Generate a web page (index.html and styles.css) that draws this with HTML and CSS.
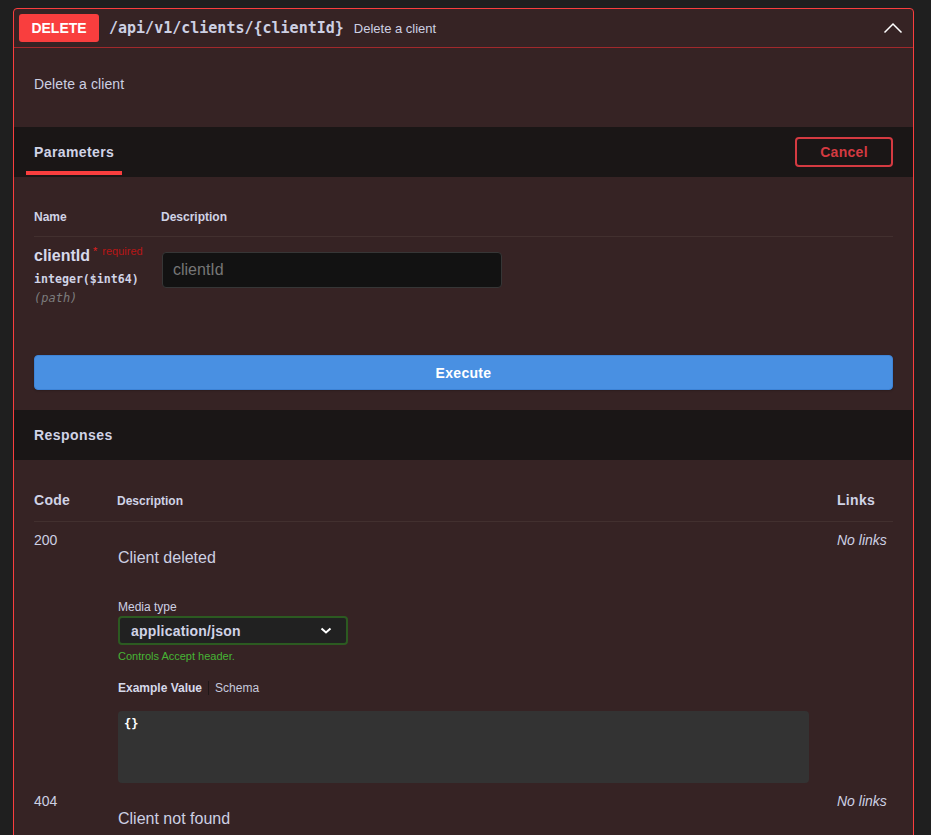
FILE: index.html
```html
<!DOCTYPE html>
<html lang="en">
<head>
<meta charset="utf-8">
<title>DELETE /api/v1/clients/{clientId}</title>
<link rel="stylesheet" href="styles.css">
</head>
<body>
<div class="opblock">
  <div class="summary">
    <span class="method">DELETE</span>
    <span class="path">/api/v1/clients/{clientId}</span>
    <span class="summary-desc">Delete a client</span>
    <svg class="arrow" width="20" height="20" viewBox="0 0 20 20" aria-hidden="true">
      <polyline points="1.5,14.5 10,6 18.5,14.5" fill="none" stroke="#ffffff" stroke-width="1.5"/>
    </svg>
  </div>

  <div class="description">Delete a client</div>

  <div class="section-header">
    <div class="tab">Parameters</div>
    <button class="btn-cancel">Cancel</button>
  </div>

  <div class="params">
    <div class="params-head">
      <div>Name</div>
      <div>Description</div>
    </div>
    <div class="param-row">
      <div class="param-name">
        <div class="pname">clientId<span class="star">*</span><span class="req">required</span></div>
        <div class="ptype">integer($int64)</div>
        <div class="pin">(path)</div>
      </div>
      <div class="param-desc">
        <input class="pinput" type="text" placeholder="clientId">
      </div>
    </div>
  </div>

  <div class="execute-wrap">
    <button class="execute">Execute</button>
  </div>

  <div class="section-header">
    <h4 class="section-title">Responses</h4>
  </div>

  <div class="responses">
    <div class="resp-head">
      <div class="col-code">Code</div>
      <div class="col-desc">Description</div>
      <div class="col-links">Links</div>
    </div>

    <div class="resp-row">
      <div class="status">200</div>
      <div class="resp-desc">
        <p class="resp-msg">Client deleted</p>
        <div class="media-label">Media type</div>
        <div class="select">
          <span>application/json</span>
          <svg class="select-chev" width="12" height="7" viewBox="0 0 12 7" aria-hidden="true">
            <polyline points="1.5,1.5 6,5.5 10.5,1.5" fill="none" stroke="#ffffff" stroke-width="2"/>
          </svg>
        </div>
        <div class="accept-msg">Controls Accept header.</div>
        <div class="example-tabs">
          <span class="ex-tab active">Example Value</span>
          <span class="ex-tab">Schema</span>
        </div>
        <pre class="code-block">{}</pre>
      </div>
      <div class="links">No links</div>
    </div>

    <div class="resp-row">
      <div class="status">404</div>
      <div class="resp-desc">
        <p class="resp-msg">Client not found</p>
      </div>
      <div class="links">No links</div>
    </div>
  </div>
</div>
</body>
</html>
```

FILE: styles.css
```css
* {
  box-sizing: border-box;
}

html, body {
  background: #1f1f1f;
}

body {
  margin: 0;
  padding: 8px 17px 40px 13px;
  font-family: "Liberation Sans", Arial, sans-serif;
  color: #cdd0e3;
}

.opblock {
  width: 901px;
  border: 1px solid #f93e3e;
  border-radius: 4px;
  background: #362324;
}

/* summary header */
.summary {
  display: flex;
  align-items: center;
  padding: 5px;
  border-bottom: 1px solid #a1292c;
}

.method {
  width: 80px;
  padding: 6px 0;
  line-height: 16px;
  text-align: center;
  font-size: 14px;
  font-weight: 700;
  color: #ffffff;
  background: #f93e3e;
  border-radius: 3px;
}

.path {
  padding: 0 10px;
  font-family: "DejaVu Sans Mono", monospace;
  font-size: 15px;
  font-weight: 700;
  color: #cdd0e3;
}

.summary-desc {
  font-size: 13px;
  color: #cdd0e3;
}

.arrow {
  margin-left: auto;
  margin-right: 5px;
}

/* description */
.description {
  padding: 28px 20px 35px;
  font-size: 14px;
  line-height: 16px;
  letter-spacing: 0.1px;
}

/* section headers */
.section-header {
  display: flex;
  align-items: center;
  justify-content: space-between;
  height: 50px;
  padding: 0 20px 0 12px;
  background: #1a1616;
}

.tab {
  align-self: stretch;
  display: flex;
  align-items: center;
  padding: 5px 8px 0;
  margin-bottom: 2px;
  border-bottom: 4px solid #f93e3e;
  font-size: 14px;
  font-weight: 700;
  letter-spacing: 0.4px;
  color: #d0d3e6;
}

.section-title {
  margin: 0;
  padding-left: 8px;
  font-size: 14px;
  font-weight: 700;
  letter-spacing: 0.45px;
  color: #d0d3e6;
}

.btn-cancel {
  width: 98px;
  height: 30px;
  padding: 0;
  background: transparent;
  border: 2px solid #d43a41;
  border-radius: 4px;
  font-family: "Liberation Sans", Arial, sans-serif;
  font-size: 14px;
  font-weight: 700;
  letter-spacing: 0.3px;
  color: #d43a41;
}

/* parameters */
.params {
  padding: 20px 20px 20px;
}

.params-head {
  display: grid;
  grid-template-columns: 128px 1fr;
  padding: 13px 0 12px;
  border-bottom: 1px solid #42302f;
  font-size: 12px;
  font-weight: 700;
  color: #d0d3e6;
}

.params-head div:last-child {
  margin-left: -1px;
}

.param-row {
  display: grid;
  grid-template-columns: 128px 1fr;
  padding: 10px 0 10px;
}

.pname {
  font-size: 16px;
  font-weight: 700;
  color: #d6d9ea;
}

.star {
  padding-left: 3px;
  font-size: 11px;
  font-weight: 400;
  line-height: 0;
  color: #e02020;
  vertical-align: 6px;
}

.req {
  padding-left: 5px;
  font-size: 11px;
  font-weight: 400;
  line-height: 0;
  color: #b81616;
  vertical-align: 6px;
}

.ptype {
  padding: 7px 0 5px;
  font-family: "DejaVu Sans Mono", monospace;
  font-size: 11.6px;
  font-weight: 700;
  color: #d0d3e6;
}

.pin {
  font-family: "DejaVu Sans Mono", monospace;
  font-size: 12px;
  font-style: italic;
  color: #7c7c7c;
}

.pinput {
  display: block;
  width: 340px;
  height: 36px;
  margin: 5px 0 0;
  padding: 8px 10px;
  background: #121212;
  border: 1px solid #363636;
  border-radius: 4px;
  font-family: "Liberation Sans", Arial, sans-serif;
  font-size: 16px;
  color: #cdd0e3;
}

.pinput::placeholder {
  color: #767676;
}

/* execute */
.execute-wrap {
  padding: 20px;
}

.execute {
  display: block;
  width: 100%;
  height: 35px;
  padding: 0;
  background: #4990e2;
  border: 1px solid #3d83d6;
  border-radius: 4px;
  box-shadow: 0 1px 2px rgba(0, 0, 0, 0.2);
  font-family: "Liberation Sans", Arial, sans-serif;
  font-size: 14px;
  font-weight: 700;
  letter-spacing: 0.3px;
  color: #ffffff;
}

/* responses */
.responses {
  padding: 20px 20px 20px;
}

.resp-head {
  display: grid;
  grid-template-columns: 83px 1fr 56px;
  align-items: baseline;
  padding: 12px 0 13px;
  border-bottom: 1px solid #42302f;
  font-weight: 700;
  color: #d0d3e6;
}

.col-code,
.col-links {
  font-size: 14px;
  letter-spacing: 0.3px;
}

.col-desc {
  font-size: 12px;
}

.resp-row {
  display: grid;
  grid-template-columns: 83px 1fr 56px;
  padding-top: 10px;
}

.status {
  font-size: 14px;
  line-height: 16px;
}

.links {
  font-size: 14px;
  line-height: 16px;
  font-style: italic;
}

.resp-desc {
  padding-right: 28px;
  padding-left: 1px;
}

.resp-msg {
  margin: 17px 0 0;
  font-size: 16px;
  line-height: 18px;
}

.media-label {
  margin-top: 33px;
  font-size: 12px;
  line-height: 14px;
}

.select {
  display: flex;
  align-items: center;
  justify-content: space-between;
  width: 230px;
  height: 29px;
  margin-top: 2px;
  padding: 0 14px 0 11px;
  background: #212121;
  border: 2px solid #2c5a21;
  border-radius: 4px;
  font-size: 14px;
  font-weight: 700;
  letter-spacing: 0.2px;
  color: #d0d3e6;
}

.accept-msg {
  margin-top: 5px;
  font-size: 11px;
  line-height: 13px;
  color: #46b535;
}

.example-tabs {
  display: flex;
  align-items: center;
  margin-top: 18px;
  font-size: 12px;
  line-height: 14px;
}

.ex-tab.active {
  padding-right: 6px;
  margin-right: 6px;
  border-right: 1px solid #1f1818;
  font-weight: 700;
  color: #d6d9ea;
}

.ex-tab {
  color: #c6c9dc;
}

.code-block {
  height: 72px;
  margin: 16px 0 0;
  padding: 6px 6px;
  background: #333333;
  border-radius: 4px;
  font-family: "DejaVu Sans Mono", monospace;
  font-size: 12px;
  font-weight: 700;
  color: #ffffff;
}
```
